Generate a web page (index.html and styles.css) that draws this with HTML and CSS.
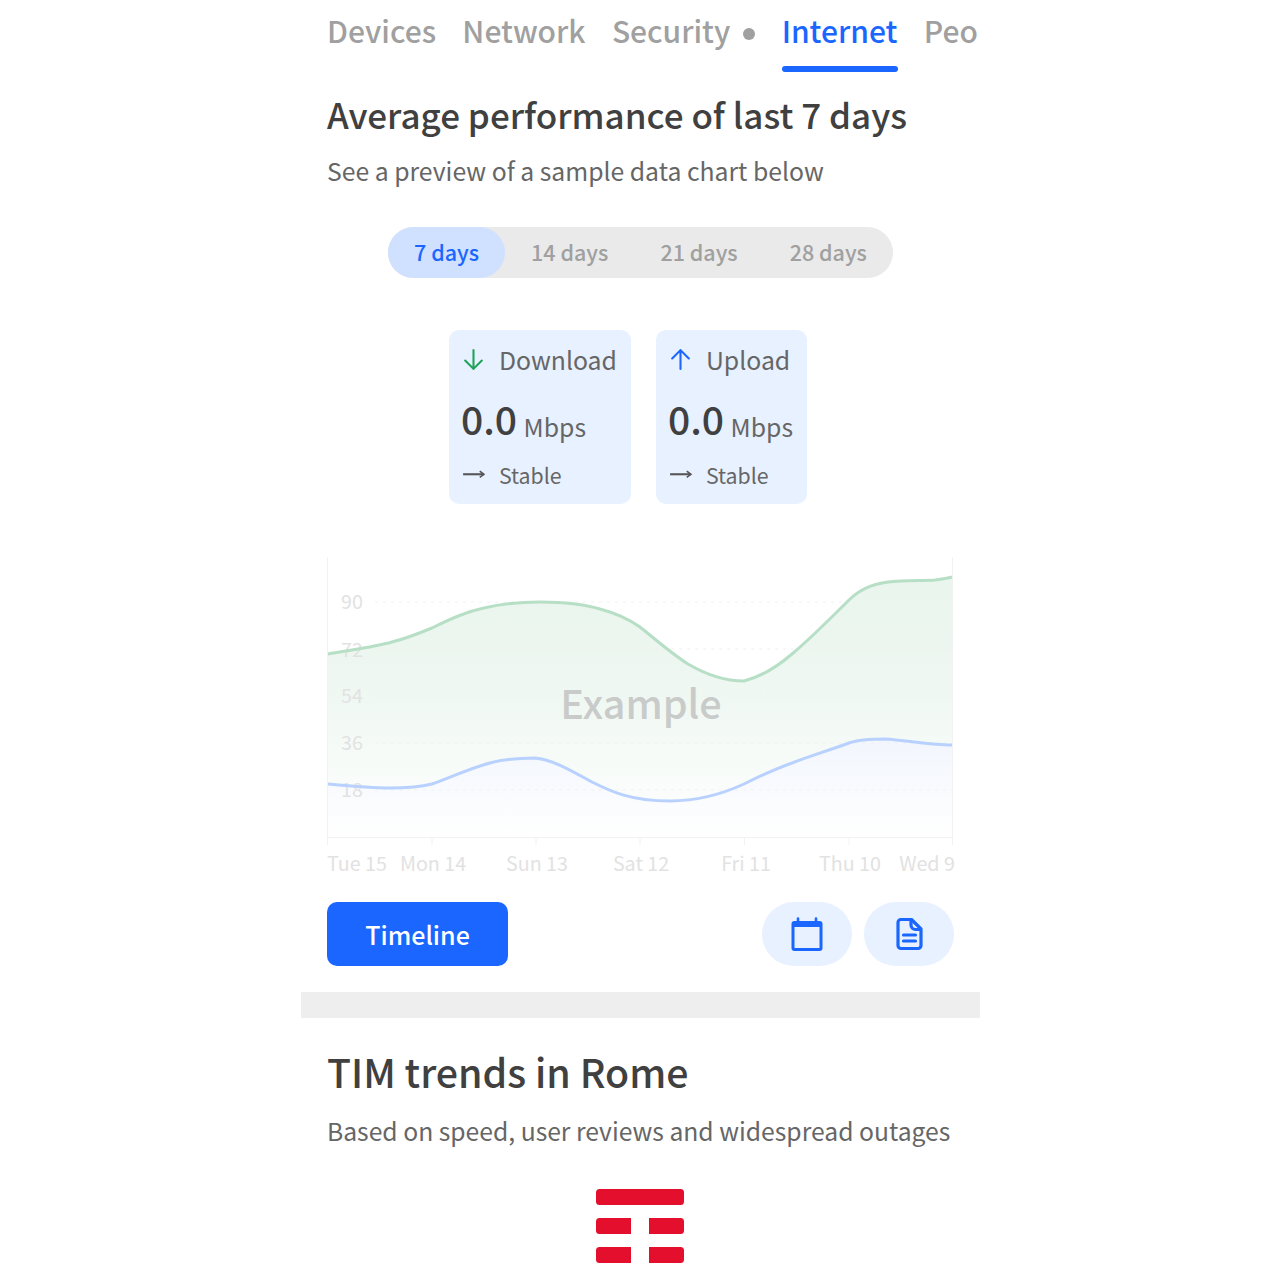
FILE: index.html
```html
<!DOCTYPE html>
<html lang="en">
<head>
<meta charset="utf-8">
<title>Internet</title>
<link rel="stylesheet" href="styles.css">
</head>
<body>
<main class="page">
  <nav class="tabs">
    <span class="tab">Devices</span>
    <span class="tab">Network</span>
    <span class="tab">Security<i class="dot"></i></span>
    <span class="tab tab-active">Internet</span>
    <span class="tab">People</span>
  </nav>

  <section class="perf">
    <h1 class="title">Average performance of last 7 days</h1>
    <p class="sub">See a preview of a sample data chart below</p>

    <div class="seg-wrap">
      <div class="seg">
        <span class="seg-item seg-on">7 days</span>
        <span class="seg-item">14 days</span>
        <span class="seg-item">21 days</span>
        <span class="seg-item">28 days</span>
      </div>
    </div>

    <div class="cards">
      <div class="card">
        <div class="card-head">
          <svg class="ic" viewBox="0 0 24 24" fill="none" stroke="#1fa35a" stroke-width="2" stroke-linecap="round" stroke-linejoin="round"><path d="M12 3v18M4 13l8 8 8-8"/></svg>
          <span>Download</span>
        </div>
        <div class="card-val"><b>0.0</b> <span class="unit">Mbps</span></div>
        <div class="card-foot">
          <svg class="ic-f" viewBox="0 0 24 12" fill="none" stroke="#555" stroke-width="2"><path d="M2 6h20"/><path d="M18 3l4 3-4 3" stroke-width="1.5"/></svg>
          <span>Stable</span>
        </div>
      </div>
      <div class="card">
        <div class="card-head">
          <svg class="ic" viewBox="0 0 24 24" fill="none" stroke="#1a66ff" stroke-width="2" stroke-linecap="round" stroke-linejoin="round"><path d="M12 21V3M4 11l8-8 8 8"/></svg>
          <span>Upload</span>
        </div>
        <div class="card-val"><b>0.0</b> <span class="unit">Mbps</span></div>
        <div class="card-foot">
          <svg class="ic-f" viewBox="0 0 24 12" fill="none" stroke="#555" stroke-width="2"><path d="M2 6h20"/><path d="M18 3l4 3-4 3" stroke-width="1.5"/></svg>
          <span>Stable</span>
        </div>
      </div>
    </div>

    <svg class="chart" viewBox="327 550 630 330" width="630" height="330">
      <defs>
        <linearGradient id="gf" x1="0" y1="0" x2="0" y2="1">
          <stop offset="0" stop-color="#e9f5ed"/>
          <stop offset="0.4" stop-color="#eef7f1"/>
          <stop offset="1" stop-color="#ffffff"/>
        </linearGradient>
        <linearGradient id="bf" x1="0" y1="0" x2="0" y2="1">
          <stop offset="0" stop-color="#f2f6fd"/>
          <stop offset="1" stop-color="#ffffff"/>
        </linearGradient>
      </defs>
      <path d="M328 654 C350 650 375 647 392 642 C408 638 420 633 432 628 C450 619 465 612 484 608 C505 603 525 602 540 602 C560 602 580 603 600 609 C615 613 630 620 640 627 C655 639 672 654 688 664 C705 674 725 681 744 681 C760 677 778 666 792 654 C810 639 830 619 849 600 C860 589 872 584 888 582 C905 580 925 581 935 580 C942 579 948 578 952 577 V837 H328 Z" fill="url(#gf)"/>
      <path d="M328 784 C350 786 372 788 390 788 C405 788 420 787 432 784 C450 778 470 768 490 763 C505 759 520 758 535 758 C555 760 575 773 592 782 C610 791 630 801 670 801 C695 801 720 795 744 784 C760 776 775 769 792 763 C810 756 830 750 849 743 C860 739 875 739 885 739 C905 740 930 745 952 745 V837 H328 Z" fill="url(#bf)"/>
      <g class="grid">
        <path d="M375 602H953M375 649H953M375 696H953M375 743H953M375 790H953"/>
      </g>
      <g class="axis">
        <path d="M327.500 557V845M952.500 557V845M327 837.500H953M432 837V845M536 837V845M640 837V845M744.500 837V845M849 837V845"/>
      </g>
      <g class="y-labels">
        <text x="352" y="609">90</text>
        <text x="352" y="657">72</text>
        <text x="352" y="703">54</text>
        <text x="352" y="750">36</text>
        <text x="352" y="797">18</text>
      </g>
      <path class="line-g" d="M328 654 C350 650 375 647 392 642 C408 638 420 633 432 628 C450 619 465 612 484 608 C505 603 525 602 540 602 C560 602 580 603 600 609 C615 613 630 620 640 627 C655 639 672 654 688 664 C705 674 725 681 744 681 C760 677 778 666 792 654 C810 639 830 619 849 600 C860 589 872 584 888 582 C905 580 925 581 935 580 C942 579 948 578 952 577"/>
      <path class="line-b" d="M328 784 C350 786 372 788 390 788 C405 788 420 787 432 784 C450 778 470 768 490 763 C505 759 520 758 535 758 C555 760 575 773 592 782 C610 791 630 801 670 801 C695 801 720 795 744 784 C760 776 775 769 792 763 C810 756 830 750 849 743 C860 739 875 739 885 739 C905 740 930 745 952 745"/>
      <g class="x-labels">
        <text x="357" y="871">Tue 15</text>
        <text x="433" y="871">Mon 14</text>
        <text x="537" y="871">Sun 13</text>
        <text x="641" y="871">Sat 12</text>
        <text x="746" y="871">Fri 11</text>
        <text x="850" y="871">Thu 10</text>
        <text x="927" y="871">Wed 9</text>
      </g>
      <text class="watermark" x="641" y="719">Example</text>
    </svg>

    <div class="actions">
      <button class="btn">Timeline</button>
      <div class="pills">
        <span class="pill">
          <svg class="pill-ic" viewBox="0 0 32 34" fill="none"><path d="M7 1.500v4M25 1.500v4" stroke="#1a66ff" stroke-width="2.600" stroke-linecap="round"/><rect x="0.500" y="4" width="31" height="30" rx="3" fill="#1a66ff"/><rect x="3.500" y="10" width="25" height="21" fill="#e8f1ff"/></svg>
        </span>
        <span class="pill">
          <svg class="pill-ic" viewBox="0 0 32 34" fill="none"><path d="M8 2.500h10.500L28 12v16.500a3 3 0 0 1-3 3H8a3 3 0 0 1-3-3v-23a3 3 0 0 1 3-3z" stroke="#1a66ff" stroke-width="3.200" stroke-linejoin="round"/><path d="M18 2.500v5.500a4.500 4.500 0 0 0 4.500 4.500H28" stroke="#1a66ff" stroke-width="3.200"/><path d="M10.500 18h12M10.500 24h12" stroke="#1a66ff" stroke-width="3.200" stroke-linecap="round"/></svg>
        </span>
      </div>
    </div>
  </section>

  <div class="band"></div>

  <section class="trends">
    <h2 class="title-lg">TIM trends in Rome</h2>
    <p class="sub">Based on speed, user reviews and widespread outages</p>
    <svg class="logo" viewBox="0 0 88 74" width="88" height="74" fill="#e30f2d">
      <rect x="0" y="0" width="88" height="16" rx="3.500"/>
      <path d="M3.500 29H35V45H3.500A3.500 3.500 0 0 1 0 41.500V32.500A3.500 3.500 0 0 1 3.500 29z"/>
      <path d="M53 29H84.500A3.500 3.500 0 0 1 88 32.500V41.500A3.500 3.500 0 0 1 84.500 45H53z"/>
      <path d="M3.500 58H35V74H3.500A3.500 3.500 0 0 1 0 70.500V61.500A3.500 3.500 0 0 1 3.500 58z"/>
      <path d="M53 58H84.500A3.500 3.500 0 0 1 88 61.500V70.500A3.500 3.500 0 0 1 84.500 74H53z"/>
    </svg>
  </section>
</main>
</body>
</html>
```
FILE: styles.css
```css
* { box-sizing: border-box; }
html, body { margin: 0; padding: 0; background: #fff; }
body {
  height: 1280px;
  overflow: hidden;
  font-family: "Noto Sans CJK SC", "Noto Sans", sans-serif;
  color: #404040;
}
.page {
  width: 679px;
  margin-left: 301px;
  overflow: hidden;
}
.tabs {
  display: flex;
  gap: 26.300px;
  height: 72px;
  padding-left: 26px;
  overflow: hidden;
  white-space: nowrap;
}
.tab {
  position: relative;
  flex: none;
  font-size: 30px;
  font-weight: 500;
  line-height: 60px;
  color: #a0a0a0;
}
.tab-active { color: #1a66ff; }
.tab-active::after {
  content: "";
  position: absolute;
  left: 0;
  right: 0;
  bottom: 0;
  height: 6px;
  border-radius: 3px;
  background: #1a66ff;
}
.dot {
  display: inline-block;
  width: 12px;
  height: 12px;
  margin-left: 13px;
  border-radius: 50%;
  background: #a0a0a0;
  vertical-align: 3px;
}
.perf { padding: 0 26px; }
.title {
  margin: 17px 0 0;
  font-size: 35px;
  font-weight: 500;
  line-height: 50px;
  color: #404040;
  white-space: nowrap;
}
.sub {
  margin: 15px 0 0;
  font-size: 24.750px;
  font-weight: 400;
  line-height: 32px;
  color: #666;
  white-space: nowrap;
}
.seg-wrap {
  display: flex;
  justify-content: center;
  margin-top: 41px;
}
.seg {
  display: flex;
  height: 51px;
  border-radius: 26px;
  background: #eaeaea;
}
.seg-item {
  padding: 0 26px;
  font-size: 21.500px;
  font-weight: 500;
  line-height: 49px;
  color: #a0a0a0;
}
.seg-on {
  border-radius: 26px;
  background: #d0e0ff;
  color: #1a66ff;
}
.cards {
  display: flex;
  justify-content: center;
  gap: 25px;
  margin-top: 52px;
  padding-right: 25px;
}
.card {
  display: flex;
  flex-direction: column;
  height: 174px;
  padding: 0 14px 0 12px;
  border-radius: 10px;
  background: #e8f1ff;
}
.card-head {
  display: flex;
  align-items: center;
  gap: 13px;
  height: 58px;
  padding-left: 1px;
  font-size: 24.800px;
  color: #666;
}
.ic { width: 25px; height: 25px; flex: none; margin-left: -1px; }
.card-val {
  height: 60px;
  line-height: 60px;
  font-size: 24.800px;
  color: #666;
  white-space: nowrap;
}
.card-val b {
  font-size: 39px;
  font-weight: 500;
  color: #404040;
}
.unit {
  margin-left: 1px;
  vertical-align: -2px;
}
.card-foot {
  display: flex;
  align-items: center;
  gap: 13px;
  height: 52px;
  font-size: 21.300px;
  color: #666;
}
.ic-f { width: 25px; height: 12.500px; flex: none; }
.chart {
  display: block;
  margin-top: 46px;
  overflow: visible;
}
.grid path {
  fill: none;
  stroke: #f0f0f0;
  stroke-width: 1;
  stroke-dasharray: 3 5;
}
.axis path { fill: none; stroke: #f2f2f2; stroke-width: 1; }
.y-labels text {
  font-size: 19.700px;
  fill: #e2e2e2;
  text-anchor: middle;
}
.x-labels text {
  font-size: 19.700px;
  fill: #e2e2e2;
  text-anchor: middle;
}
.line-g, .line-b { fill: none; stroke-width: 3; }
.line-g { stroke: #b7dfc6; }
.line-b { stroke: #b9d1fe; }
.watermark {
  font-size: 39.500px;
  font-weight: 500;
  fill: #c8cbc9;
  text-anchor: middle;
}
.actions {
  display: flex;
  justify-content: space-between;
  margin-top: 22px;
}
.btn {
  width: 181px;
  height: 64px;
  border: 0;
  border-radius: 10px;
  background: #1a66ff;
  color: #fff;
  font-family: inherit;
  font-size: 25px;
  font-weight: 500;
}
.pills { display: flex; gap: 12px; }
.pill {
  display: flex;
  align-items: center;
  justify-content: center;
  width: 90px;
  height: 64px;
  border-radius: 32px;
  background: #e8f1ff;
}
.pill-ic { width: 32px; height: 34px; }
.band {
  height: 26px;
  margin-top: 26px;
  background: #eee;
}
.trends { padding: 0 27px 0 26px; }
.title-lg {
  margin: 23px 0 0;
  font-size: 39.300px;
  font-weight: 500;
  line-height: 60px;
  color: #404040;
}
.trends .sub { margin-top: 13px; font-size: 24.700px; }
.logo {
  display: block;
  margin: 43px auto 0;
}
```
